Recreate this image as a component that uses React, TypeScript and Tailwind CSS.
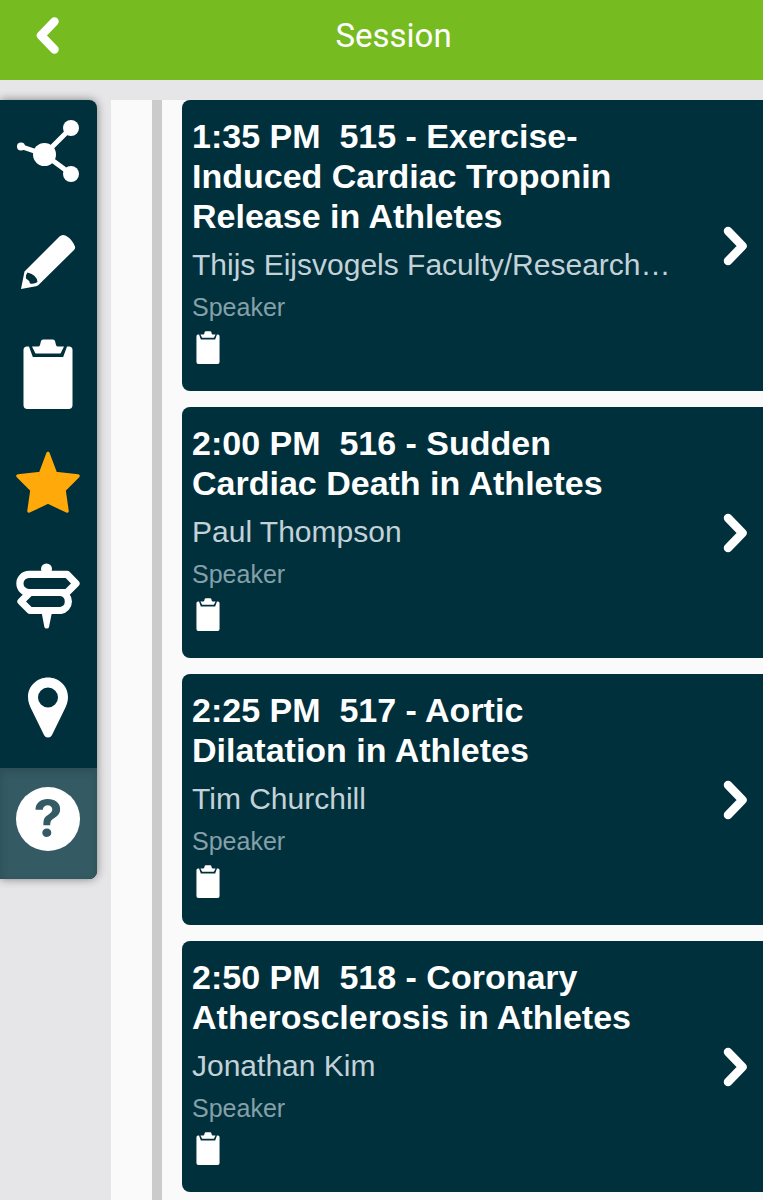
import type { ReactNode } from 'react';

interface Talk {
  id: string;
  time: string;
  title: string;
  speaker: string;
}

const talks: Talk[] = [
  {
    id: '515',
    time: '1:35 PM',
    title: 'Exercise-Induced Cardiac Troponin Release in Athletes',
    speaker: 'Thijs Eijsvogels Faculty/Research…',
  },
  {
    id: '516',
    time: '2:00 PM',
    title: 'Sudden Cardiac Death in Athletes',
    speaker: 'Paul Thompson',
  },
  {
    id: '517',
    time: '2:25 PM',
    title: 'Aortic Dilatation in Athletes',
    speaker: 'Tim Churchill',
  },
  {
    id: '518',
    time: '2:50 PM',
    title: 'Coronary Atherosclerosis in Athletes',
    speaker: 'Jonathan Kim',
  },
];

function Icon({ children }: { children: ReactNode }) {
  return (
    <svg viewBox="0 0 64 64" className="size-16 overflow-visible" fill="currentColor" aria-hidden="true">
      {children}
    </svg>
  );
}

function ClipboardIcon({ className }: { className: string }) {
  return (
    <svg viewBox="0 0 50 70" className={className} fill="currentColor" aria-hidden="true">
      <path d="M4 7.5H6L9.8 18H40.2L44 7.5H46Q49.5 7.5 49.5 11V66Q49.5 70 45.5 70H4.5Q.5 70 .5 66V11Q.5 7.5 4 7.5Z" />
      <path d="M20 .5H30Q31.5 .5 32 2L33 6Q33.5 7.5 35 7.5H41L37.5 14.5H12.5L9 7.5H15Q16.5 7.5 17 6L18 2Q18.5 .5 20 .5Z" />
    </svg>
  );
}

const tools = [
  {
    id: 'share',
    label: 'Share',
    color: 'text-white',
    icon: (
      <Icon>
        <path d="M5 26.5L28.5 34.5L55 8M28.5 34.5L55 54" fill="none" stroke="currentColor" strokeWidth="5" />
        <circle cx="5" cy="26.5" r="4" />
        <circle cx="28.5" cy="34.5" r="11.5" />
        <circle cx="55" cy="8" r="8" />
        <circle cx="55" cy="54" r="8" />
      </Icon>
    ),
  },
  {
    id: 'notes',
    label: 'Notes',
    color: 'text-white',
    icon: (
      <Icon>
        <path
          fillRule="evenodd"
          d="M5 58L8.5 40.5L43.5 5.5Q46 3 49.5 4.5Q56 8 59 15.500Q59.5 17.5 58 19L22.5 54Q21.5 55 20 55.2ZM11.500 41.5Q9.500 44 10 47.5Q13 49 14 52.5Q18 53.5 21.5 51Q21 44 11.500 41.5Z"
        />
      </Icon>
    ),
  },
  {
    id: 'survey',
    label: 'Survey',
    color: 'text-white',
    icon: (
      <span className="flex w-16 justify-center">
        <ClipboardIcon className="h-[70px] w-[50px]" />
      </span>
    ),
  },
  {
    id: 'favorite',
    label: 'Favorite',
    color: 'text-[#ffa90a]',
    icon: (
      <Icon>
        <path
          d="M32 0.500L39.5 20.500L62 23L48 37L51 58L32 49L13 58L16 37L2 23L24.5 20.500Z"
          stroke="currentColor"
          strokeWidth="3.5"
          strokeLinejoin="round"
        />
      </Icon>
    ),
  },
  {
    id: 'directions',
    label: 'Directions',
    color: 'text-white',
    icon: (
      <Icon>
        <circle cx="30.5" cy="5" r="5.5" />
        <g fill="none" stroke="currentColor" strokeWidth="7.2" strokeLinejoin="round">
          <path d="M13 10.3H51L60 19.5L51 28.5H13A9.1 9.1 0 0 1 13 10.3Z" />
          <path d="M14 28.5H44.6A9.1 9.1 0 0 1 44.6 46.5H14L5 37.5Z" />
        </g>
        <path d="M25.5 48H36L33 63Q32.7 64.5 30.7 64.5Q28.7 64.5 28.4 63Z" />
      </Icon>
    ),
  },
  {
    id: 'map',
    label: 'Map',
    color: 'text-white',
    icon: (
      <Icon>
        <path
          fillRule="evenodd"
          d="M32 2.5C43 2.5 52 11 52 22C52 27 50.5 30.5 48 35.5L36.5 59Q35 62.5 32 62.5Q29 62.5 27.5 59L16 35.5C13.5 30.5 12 27 12 22C12 11 21 2.5 32 2.5ZM32 12.5A10 10 0 1 0 32 32.5A10 10 0 1 0 32 12.5Z"
        />
      </Icon>
    ),
  },
];

export default function App() {
  return (
    <div className="flex min-h-screen flex-col bg-[#e6e5e7] font-['Liberation_Sans',Arial,sans-serif]">
      <header className="grid h-20 grid-cols-[96px_1fr_72px] items-center bg-[#76bc21] pb-2 text-white">
        <button type="button" aria-label="Back" className="flex h-full items-center pl-9">
          <svg viewBox="0 0 24 38" className="h-[38px] w-6" fill="none" stroke="currentColor" strokeWidth="8.5" strokeLinecap="round" strokeLinejoin="round" aria-hidden="true">
            <path d="M18.5 4.5L5 18.5L18.5 32.5" />
          </svg>
        </button>
        <h1 className="text-center font-['Roboto',sans-serif] text-[33px] leading-10 font-normal">Session</h1>
      </header>

      <div className="flex flex-1 items-stretch pt-5">
        <div className="w-[111px] shrink-0">
          <nav className="w-[97px] overflow-hidden rounded-r-lg bg-[#00303c] pt-[2px] shadow-[0_0_10px_rgba(0,0,0,0.45)]">
            {tools.map((tool) => (
              <button
                key={tool.id}
                type="button"
                aria-label={tool.label}
                className={`flex h-[111px] w-full items-center pb-[11px] pl-4 ${tool.color}`}
              >
                {tool.icon}
              </button>
            ))}
            <button
              type="button"
              aria-label="Help"
              className="flex h-[111px] w-full items-center bg-[#345a63] pb-[10px] pl-4 shadow-[inset_0_3px_8px_rgba(0,0,0,0.15)]"
            >
              <span className="flex size-16 items-center justify-center rounded-full bg-white font-['Inter',sans-serif] text-[52px] leading-none font-bold text-[#345a63]">
                ?
              </span>
            </button>
          </nav>
        </div>

        <main className="flex min-w-0 flex-1 bg-[#fafafa]">
          <div className="ml-[41px] w-[10px] shrink-0 bg-[#cbcbcb]" />
          <ul className="ml-5 flex min-w-0 flex-1 flex-col gap-4">
            {talks.map((talk) => (
              <li key={talk.id}>
                <a href={`#${talk.id}`} className="flex items-center rounded-l-lg bg-[#00303c] pr-[15px] pl-[10px]">
                  <div className="min-w-0 flex-1 pt-4 pb-[27px]">
                    <h2 className="max-w-[480px] text-[34px] leading-10 font-bold text-white">
                      {`${talk.time}\u00a0 ${talk.id} - ${talk.title}`}
                    </h2>
                    <p className="mt-[11px] truncate text-[30px] leading-9 text-[#c3d2d8]">{talk.speaker}</p>
                    <p className="mt-2 text-[25px] leading-8 text-[#85a0a9]">Speaker</p>
                    <ClipboardIcon className="mt-2 ml-1 h-[33px] w-6 text-white" />
                  </div>
                  <svg viewBox="0 0 26 40" className="h-10 w-[26px] shrink-0 text-white" fill="none" stroke="currentColor" strokeWidth="8.5" strokeLinecap="round" strokeLinejoin="round" aria-hidden="true">
                    <path d="M6 5L20.5 20L6 35" />
                  </svg>
                </a>
              </li>
            ))}
          </ul>
        </main>
      </div>
    </div>
  );
}
